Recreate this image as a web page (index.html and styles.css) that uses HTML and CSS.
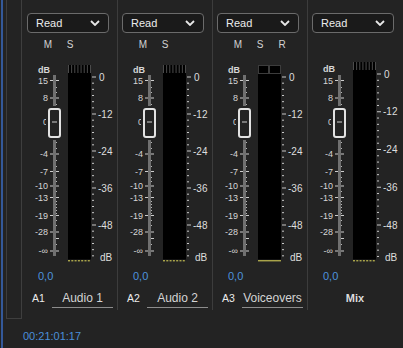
FILE: index.html
```html
<!DOCTYPE html>
<html>
<head>
<meta charset="utf-8">
<link rel="stylesheet" href="styles.css">
</head>
<body>
<div class="app">
  <div class="side"><div class="side-line"></div><div class="side-box"></div></div>
  <div class="main">
    <div class="channels">
      <div class="channel first">
        <div class="dropdown"><span>Read</span><svg class="chev" width="10" height="6" viewBox="0 0 10 6"><polyline points="1,1 5,5 9,1"/></svg></div>
        <div class="msr"><span>M</span><span>S</span></div>
        <div class="meter" data-kind="std"></div>
        <div class="value">0,0</div>
        <div class="name-row"><span class="tid">A1</span><span class="tname">Audio 1</span></div>
      </div>
      <div class="channel">
        <div class="dropdown"><span>Read</span><svg class="chev" width="10" height="6" viewBox="0 0 10 6"><polyline points="1,1 5,5 9,1"/></svg></div>
        <div class="msr"><span>M</span><span>S</span></div>
        <div class="meter" data-kind="std"></div>
        <div class="value">0,0</div>
        <div class="name-row"><span class="tid">A2</span><span class="tname">Audio 2</span></div>
      </div>
      <div class="channel">
        <div class="dropdown"><span>Read</span><svg class="chev" width="10" height="6" viewBox="0 0 10 6"><polyline points="1,1 5,5 9,1"/></svg></div>
        <div class="msr"><span>M</span><span>S</span><span>R</span></div>
        <div class="meter" data-kind="mono"></div>
        <div class="value">0,0</div>
        <div class="name-row"><span class="tid">A3</span><span class="tname">Voiceovers</span></div>
      </div>
      <div class="channel">
        <div class="dropdown"><span>Read</span><svg class="chev" width="10" height="6" viewBox="0 0 10 6"><polyline points="1,1 5,5 9,1"/></svg></div>
        <div class="msr"></div>
        <div class="meter" data-kind="mix"></div>
        <div class="value">0,0</div>
        <div class="name-row mix"><span class="mixname">Mix</span></div>
      </div>
    </div>
    <div class="timecode">00:21:01:17</div>
  </div>
</div>
<script src="script.js"></script>
</body>
</html>
```

FILE: styles.css
```css
* { box-sizing: border-box; }
html, body { margin: 0; padding: 0; }
body {
  background: #232323;
  width: 403px;
  height: 348px;
  overflow: hidden;
  font-family: "Liberation Sans", Arial, sans-serif;
  color: #d4d4d4;
}
.app { display: flex; height: 348px; }
.side { width: 22px; flex: none; display: flex; }
.side-line { width: 2px; margin-left: 1px; height: 348px; background: #34599a; }
.side-box { width: 16px; margin-left: 3px; height: 319px; border: 1px solid #3e3e3e; border-top: none; }
.main { flex: 1; display: flex; flex-direction: column; }
.channels { display: flex; height: 310px; }
.channel {
  width: 95px;
  flex: none;
  border-left: 1px solid #3c3c3c;
  display: flex;
  flex-direction: column;
}
.channel.first { border-left-color: transparent; }
.dropdown {
  margin: 13px 0 0 4px;
  width: 82px;
  height: 20px;
  border: 1px solid #6b6b6b;
  border-radius: 4px;
  background: #1a1a1a;
  display: flex;
  align-items: center;
  justify-content: space-between;
  padding: 0 8px;
  font-size: 11px;
  color: #ececec;
}
.chev polyline { fill: none; stroke: #e8e8e8; stroke-width: 1.8; }
.msr {
  display: flex;
  margin: 7px 0 0 14px;
  height: 10px;
  font-size: 10px;
  line-height: 10px;
  color: #d2d2d2;
}
.msr span { width: 22px; text-align: center; }
.meter { margin: 10px 0 0 -1px; height: 206px; }
.meter svg { display: block; }
.fl { font-size: 9px; fill: #d6d6d6; text-anchor: end; }
.fl-db { text-anchor: start; font-weight: bold; }
.sl { font-size: 10px; fill: #dedede; }
.track { fill: #707070; }
.tk { fill: #cdcdcd; }
.dot { fill: #b5b5b5; }
.knob-mask { fill: #232323; }
.knob { fill: #232323; stroke: #e2e2e2; stroke-width: 2; }
.knob-line { fill: #cfcfcf; }
.meter-bg { fill: #000; }
.peak-line { stroke: #4b4b4b; stroke-width: 1; }
.peak-box { fill: #000; stroke: #3c3c3c; stroke-width: 1; }
.yel { stroke: #e3dc5c; stroke-width: 1; }
.yel.dash { stroke-dasharray: 2 1.3; }
.stk { fill: #c8c8c8; }
.value {
  margin: 3px 0 0 15px;
  font-size: 11px;
  line-height: 14px;
  color: #4d93dd;
}
.name-row {
  display: flex;
  align-items: baseline;
  margin: 8px 0 0 9px;
}
.name-row.mix { justify-content: center; margin-left: 0; }
.tid { width: 20px; font-size: 10.5px; color: #ececec; }
.tname {
  width: 61px;
  text-align: center;
  font-size: 12px;
  line-height: 14px;
  padding-bottom: 2px;
  border-bottom: 1px solid #8c8c8c;
  color: #d4d4d4;
}
.mixname { font-size: 11px; line-height: 14px; font-weight: bold; color: #dcdcdc; }
.timecode {
  margin: 19px 0 0 1px;
  font-size: 11px;
  line-height: 14px;
  color: #4a8fd8;
}
```

FILE: script.js
```js
(function () {
  function r(n) { return Math.round(n * 100) / 100; }
  var meters = document.querySelectorAll('.meter');
  for (var m = 0; m < meters.length; m++) {
    var el = meters[m];
    var kind = el.getAttribute('data-kind');
    var mix = kind === 'mix';
    var mono = kind === 'mono';
    var p = [];
    p.push('<svg width="95" height="206" viewBox="0 0 95 206">');
    p.push('<text class="fl fl-db" x="16" y="' + (mix ? 11.5 : 12.7) + '">dB</text>');
    p.push('<rect class="track" x="31" y="15" width="3" height="181"/>');
    var labels = [['15', 20.5], ['8', 38], ['0', 62], ['-4', 94], ['-7', 111.5], ['-10', 126], ['-13', 137.5], ['-19', 155.5], ['-28', 172], ['-\u221e', 191]];
    for (var i = 0; i < labels.length; i++) {
      var y = labels[i][1];
      p.push('<text class="fl" x="26" y="' + r(y + 3.2) + '">' + labels[i][0] + '</text>');
      p.push('<rect class="tk" x="28" y="' + r(y - 0.5) + '" width="3" height="1"/>');
      p.push('<rect class="tk" x="34" y="' + r(y - 0.5) + '" width="3" height="1"/>');
    }
    var dots = [27, 32, 44, 50, 82, 88, 100, 106, 117, 121, 131, 141, 144, 147, 150, 153, 160, 165, 184];
    for (i = 0; i < dots.length; i++) {
      p.push('<rect class="dot" x="34" y="' + dots[i] + '" width="1" height="1"/>');
    }
    p.push('<rect class="tk" x="34" y="178" width="3" height="1"/>');
    p.push('<rect class="knob-mask" x="24" y="46" width="17" height="34"/>');
    p.push('<rect class="knob" x="27" y="49" width="11" height="28" rx="2"/>');
    p.push('<rect class="knob-line" x="30" y="61.5" width="5" height="1"/>');
    var top = mix ? 2 : 5;
    p.push('<rect class="meter-bg" x="46" y="' + top + '" width="23" height="' + (199.5 - top) + '"/>');
    if (mono) {
      p.push('<rect class="peak-box" x="46.5" y="5.5" width="10" height="8"/>');
      p.push('<rect class="peak-box" x="57.5" y="5.5" width="11" height="8"/>');
      p.push('<line class="yel" x1="46" y1="200.8" x2="69" y2="200.8"/>');
    } else {
      for (i = 0; i <= 7; i++) {
        var x = 46.5 + i * (22 / 7);
        p.push('<line class="peak-line" x1="' + r(x) + '" y1="' + top + '" x2="' + r(x) + '" y2="' + (top + 8) + '"/>');
      }
      p.push('<line class="yel dash" x1="46" y1="200.8" x2="69" y2="200.8"/>');
    }
    var zero = mix ? 14 : 17;
    var step = (165 - zero) / 24;
    for (i = 0; i <= 29; i++) {
      var ty = zero + i * step;
      if (ty > 197) break;
      var major = (i % 6 === 0) && i <= 24;
      p.push('<rect class="stk" x="70" y="' + r(ty - 0.5) + '" width="' + (major ? 4 : 2) + '" height="1"/>');
    }
    var sl = ['0', '-12', '-24', '-36', '-48'];
    for (i = 0; i < sl.length; i++) {
      var ly = zero + i * 6 * step;
      p.push('<text class="sl" x="' + (i === 0 ? 77 : 76) + '" y="' + r(ly + 3.6) + '">' + sl[i] + '</text>');
    }
    p.push('<text class="sl" x="78" y="200.6">dB</text>');
    p.push('</svg>');
    el.innerHTML = p.join('');
  }
})();
```
